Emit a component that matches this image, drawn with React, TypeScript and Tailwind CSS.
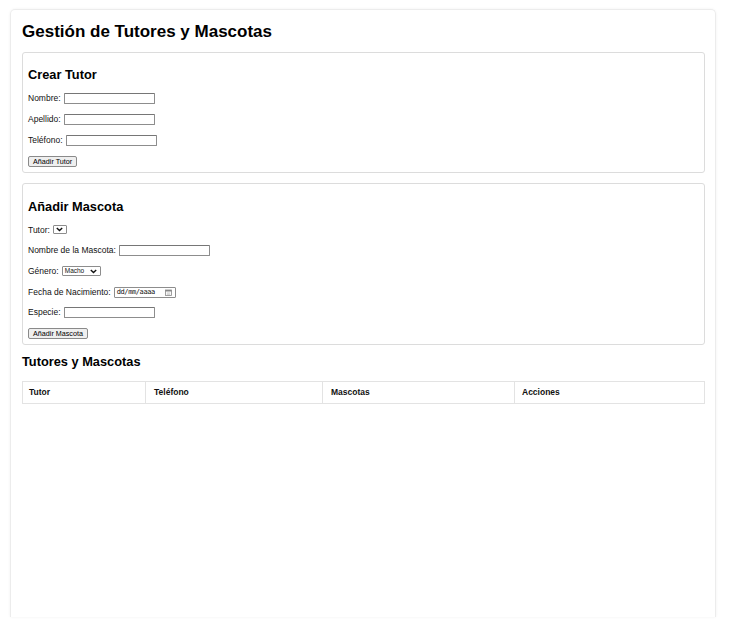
const Field = ({ label, children, h }: { label: string; children: React.ReactNode; h: string }) => (
  <div className={`flex items-center gap-[3px] ${h}`}>
    <span>{label}</span>
    {children}
  </div>
);

const TextBox = ({ w = "w-[91px]" }: { w?: string }) => (
  <div className={`${w} h-[11px] border border-[#8d8d8d] border-t-[#767676] bg-white rounded-[1px]`} />
);

const Chevron = () => (
  <svg width="7" height="5" viewBox="0 0 7 5" className="shrink-0">
    <path d="M0.8 0.9 L3.5 3.6 L6.2 0.9" fill="none" stroke="#111" strokeWidth="1.4" />
  </svg>
);

const Btn = ({ children }: { children: React.ReactNode }) => (
  <div className="h-[11px] px-[4px] flex items-center bg-[#efefef] border border-[#8a8a8a] rounded-[2px] text-[7.2px] leading-none text-black">
    {children}
  </div>
);

const App = () => {
  return (
    <div className="w-full min-h-[630px] bg-white pt-[9px] px-[10px] font-['Liberation_Sans',Arial,sans-serif] text-[#111]">
      <div className="w-[706px] h-[608px] border-t border-x border-[#ececec] rounded-t-[5px] shadow-[0_0_3px_rgba(0,0,0,0.06)] pt-[12px] pl-[11px] pr-[10px]">
        <h1 className="text-[17px] leading-[20px] font-bold text-black">Gestión de Tutores y Mascotas</h1>

        <div className="mt-[10px] border border-[#dcdcdc] rounded-[3px] px-[5px] pt-[14px] text-[8.5px]">
          <h2 className="text-[12.8px] leading-[16px] font-bold text-black">Crear Tutor</h2>
          <div className="mt-[5px]">
            <Field label="Nombre:" h="h-[21px]">
              <TextBox />
            </Field>
            <Field label="Apellido:" h="h-[21px]">
              <TextBox />
            </Field>
            <Field label="Teléfono:" h="h-[21px]">
              <TextBox />
            </Field>
            <div className="h-[21px] flex items-center">
              <Btn>Añadir Tutor</Btn>
            </div>
          </div>
        </div>

        <div className="mt-[10px] border border-[#dcdcdc] rounded-[3px] px-[5px] pt-[15px] text-[8.5px]">
          <h2 className="text-[12.8px] leading-[16px] font-bold text-black">Añadir Mascota</h2>
          <div className="mt-[4.6px]">
            <Field label="Tutor:" h="h-[20.7px]">
              <div className="w-[14px] h-[9px] border border-[#8d8d8d] bg-white flex items-center justify-center rounded-[1px]">
                <Chevron />
              </div>
            </Field>
            <Field label="Nombre de la Mascota:" h="h-[20.7px]">
              <TextBox />
            </Field>
            <Field label="Género:" h="h-[20.7px]">
              <div className="w-[39px] h-[10px] border border-[#8d8d8d] bg-white flex items-center justify-between pl-[2px] pr-[3px] rounded-[1px] text-[6.5px] leading-none">
                <span>Macho</span>
                <Chevron />
              </div>
            </Field>
            <Field label="Fecha de Nacimiento:" h="h-[20.7px]">
              <div className="w-[62px] h-[11px] border border-[#8d8d8d] bg-white flex items-center justify-between pl-[2px] pr-[3px] rounded-[1px] text-[7px] leading-none">
                <span className="font-['DejaVu_Sans_Mono',monospace] tracking-[-0.4px]">dd/mm/aaaa</span>
                <svg width="7" height="7" viewBox="0 0 7 7">
                  <rect x="0.5" y="1" width="6" height="5.5" fill="none" stroke="#888" strokeWidth="0.8" />
                  <rect x="0.5" y="1" width="6" height="1.5" fill="#888" />
                  <path d="M1.8 4 H5.2 M1.8 5.3 H5.2" stroke="#aaa" strokeWidth="0.6" />
                </svg>
              </div>
            </Field>
            <Field label="Especie:" h="h-[20.7px]">
              <TextBox />
            </Field>
            <div className="h-[20.7px] flex items-center">
              <Btn>Añadir Mascota</Btn>
            </div>
          </div>
        </div>

        <h2 className="mt-[9px] text-[12.8px] leading-[16px] font-bold text-black">Tutores y Mascotas</h2>
        <table className="mt-[11px] w-[683px] border-collapse text-[8.5px] font-bold text-[#111] text-left">
          <thead>
            <tr className="h-[22px]">
              <th className="w-[123px] border border-[#e3e3e3] pl-[6px] font-bold">Tutor</th>
              <th className="w-[177px] border border-[#e3e3e3] pl-[8px] font-bold">Teléfono</th>
              <th className="w-[192px] border border-[#e3e3e3] pl-[8px] font-bold">Mascotas</th>
              <th className="w-[190px] border border-[#e3e3e3] pl-[7px] font-bold">Acciones</th>
            </tr>
          </thead>
          <tbody></tbody>
        </table>
      </div>
    </div>
  );
};

export default App;
